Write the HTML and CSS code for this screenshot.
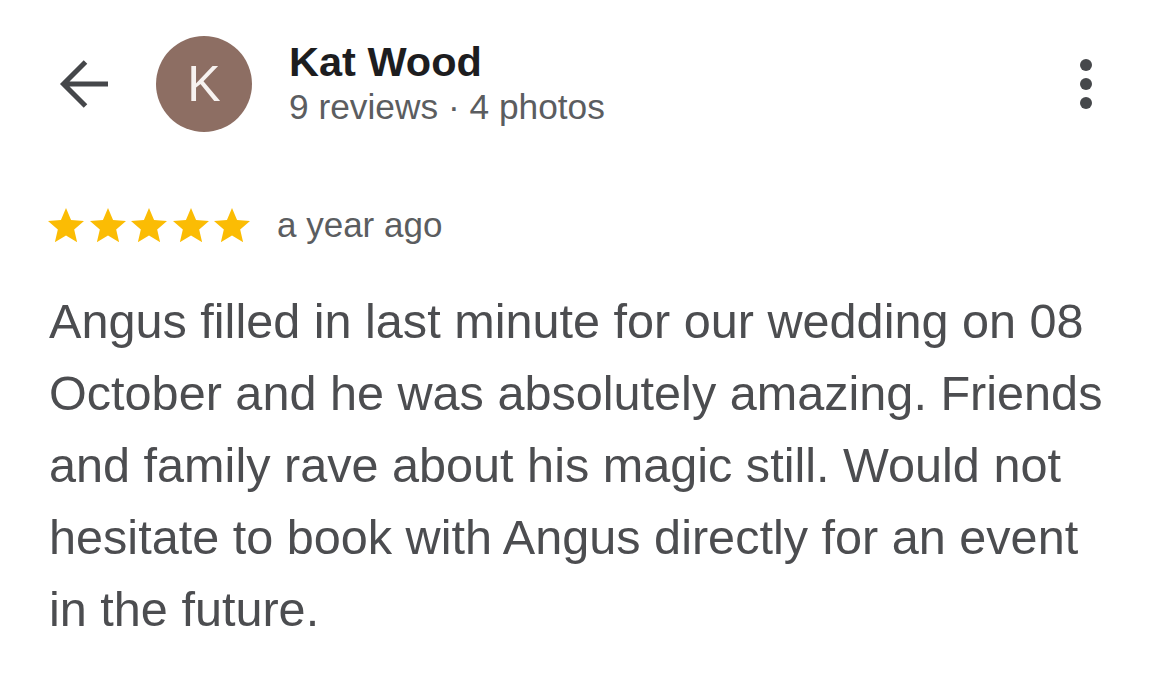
FILE: index.html
```html
<!DOCTYPE html>
<html lang="en">
<head>
<meta charset="utf-8">
<title>Review</title>
<link rel="stylesheet" href="styles.css">
</head>
<body>
<main class="review">
  <header class="reviewer">
    <button class="back" aria-label="Back">
      <svg width="52" height="52" viewBox="0 0 52 52" aria-hidden="true">
        <path d="M51 26H7 M28.5 4 L6.5 26 L28.5 48" fill="none" stroke="#45474a" stroke-width="5"/>
      </svg>
    </button>
    <div class="avatar">K</div>
    <div class="who">
      <div class="name">Kat Wood</div>
      <div class="meta">9 reviews · 4 photos</div>
    </div>
    <button class="more" aria-label="More options">
      <span class="dot"></span><span class="dot"></span><span class="dot"></span>
    </button>
  </header>

  <div class="rating">
    <div class="stars" aria-label="5 stars">
      <svg class="star" viewBox="2 2 20 19.27"><path d="M12 17.27L18.18 21l-1.64-7.03L22 9.24l-7.19-.61L12 2 9.19 8.63 2 9.24l5.46 4.73L5.82 21z"/></svg>
      <svg class="star" viewBox="2 2 20 19.27"><path d="M12 17.27L18.18 21l-1.64-7.03L22 9.24l-7.19-.61L12 2 9.19 8.63 2 9.24l5.46 4.73L5.82 21z"/></svg>
      <svg class="star" viewBox="2 2 20 19.27"><path d="M12 17.27L18.18 21l-1.64-7.03L22 9.24l-7.19-.61L12 2 9.19 8.63 2 9.24l5.46 4.73L5.82 21z"/></svg>
      <svg class="star" viewBox="2 2 20 19.27"><path d="M12 17.27L18.18 21l-1.64-7.03L22 9.24l-7.19-.61L12 2 9.19 8.63 2 9.24l5.46 4.73L5.82 21z"/></svg>
      <svg class="star" viewBox="2 2 20 19.27"><path d="M12 17.27L18.18 21l-1.64-7.03L22 9.24l-7.19-.61L12 2 9.19 8.63 2 9.24l5.46 4.73L5.82 21z"/></svg>
    </div>
    <span class="when">a year ago</span>
  </div>

  <p class="text">Angus filled in last minute for our wedding on 08 October and he was absolutely amazing. Friends and family rave about his magic still. Would not hesitate to book with Angus directly for an event in the future.</p>
</main>
</body>
</html>
```
FILE: styles.css
```css
* { box-sizing: border-box; }
html, body {
  margin: 0;
  padding: 0;
  background: #ffffff;
}
body {
  font-family: "Liberation Sans", Arial, Helvetica, sans-serif;
  width: 1170px;
  height: 678px;
  overflow: hidden;
}
.review {
  padding: 36px 48px 0 48px;
}
.reviewer {
  display: flex;
  align-items: center;
  height: 96px;
}
button {
  border: 0;
  background: none;
  padding: 0;
  margin: 0;
  cursor: pointer;
}
.back {
  display: flex;
  width: 52px;
  height: 52px;
  margin-left: 9px;
  margin-right: 47px;
  margin-top: -1px;
}
.avatar {
  width: 96px;
  height: 96px;
  border-radius: 50%;
  background: #8d6e63;
  color: #f7f2f0;
  font-size: 50px;
  line-height: 96px;
  text-align: center;
  flex: none;
}
.who {
  margin-left: 37px;
  display: flex;
  flex-direction: column;
}
.name {
  font-size: 41.5px;
  font-weight: 700;
  line-height: 46px;
  color: #1d1d1f;
}
.meta {
  font-size: 35.3px;
  line-height: 44px;
  color: #5b5d60;
}
.more {
  margin-left: auto;
  margin-right: 30px;
  display: flex;
  flex-direction: column;
  gap: 6.5px;
}
.dot {
  width: 12.5px;
  height: 12.5px;
  border-radius: 50%;
  background: #46484b;
}
.rating {
  display: flex;
  align-items: center;
  margin-top: 75px;
  height: 36px;
}
.stars {
  display: flex;
  gap: 5.5px;
}
.star {
  width: 36px;
  height: 34.7px;
  fill: #fbbc04;
}
.when {
  margin-left: 27px;
  font-size: 35px;
  color: #5b5d60;
}
.text {
  margin: 42px 0 0 1px;
  max-width: 1068px;
  font-size: 48.6px;
  line-height: 72px;
  color: #4c4d50;
}
```
